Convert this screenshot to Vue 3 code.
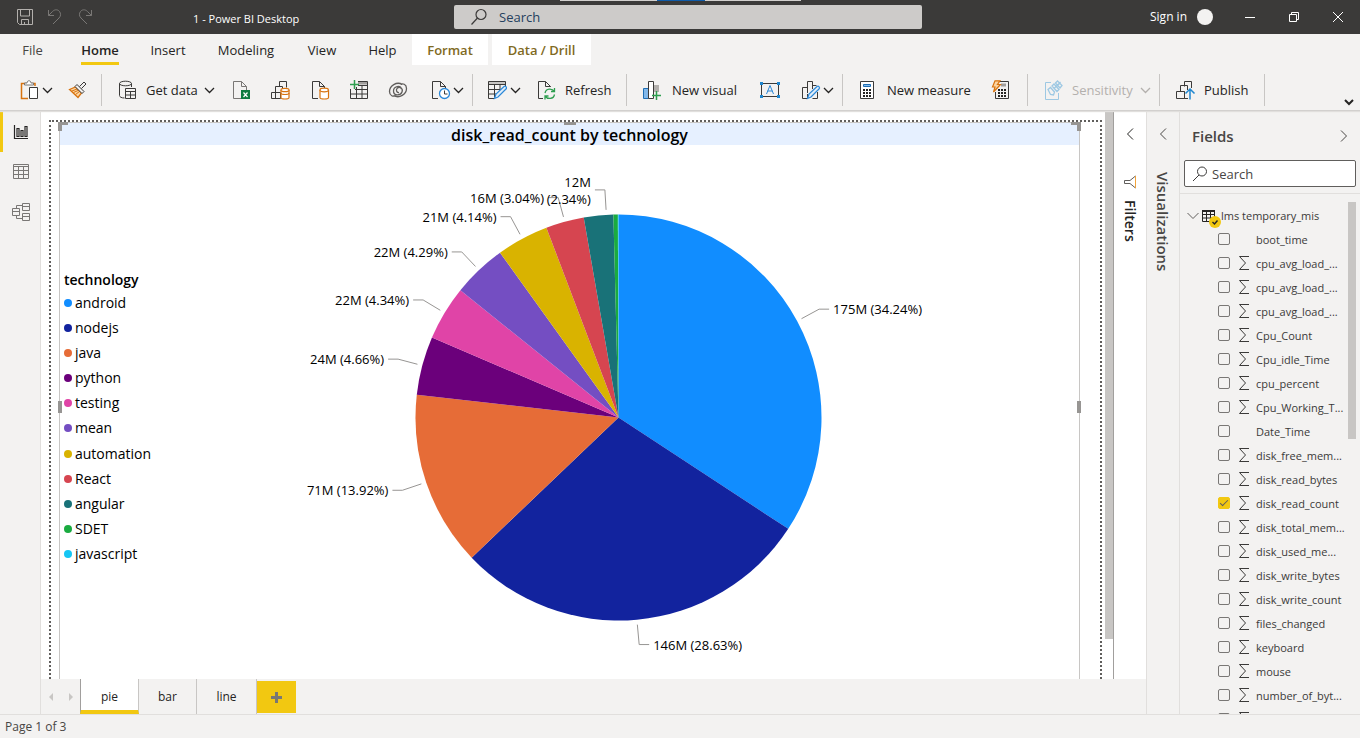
<script setup>
const cx = 409.5
const cy = 272.5
const radius = 203

const slices = [
  { name: 'android', share: 34.24, color: '#118dff', label: ['175M (34.24%)'] },
  { name: 'nodejs', share: 28.63, color: '#12239e', label: ['146M (28.63%)'] },
  { name: 'java', share: 13.92, color: '#e66c37', label: ['71M (13.92%)'] },
  { name: 'python', share: 4.66, color: '#6b007b', label: ['24M (4.66%)'] },
  { name: 'testing', share: 4.34, color: '#e044a7', label: ['22M (4.34%)'] },
  { name: 'mean', share: 4.29, color: '#744ec2', label: ['22M (4.29%)'] },
  { name: 'automation', share: 4.14, color: '#d9b300', label: ['21M (4.14%)'] },
  { name: 'React', share: 3.04, color: '#d64550', label: ['16M (3.04%)'] },
  { name: 'angular', share: 2.34, color: '#197278', label: ['12M', '(2.34%)'], anchor: 0.9905 },
  { name: 'SDET', share: 0.35, color: '#1aab40', label: null },
  { name: 'javascript', share: 0.05, color: '#15c6f4', label: null }
]

const point = (turn, r) => {
  const a = turn * 2 * Math.PI
  return [cx + r * Math.sin(a), cy - r * Math.cos(a)]
}

let total = 0
const wedges = slices.map((s) => {
  const from = total / 100
  total += s.share
  const to = total / 100
  const mid = s.anchor || (from + to) / 2
  const start = point(from, radius)
  const end = point(to, radius)
  const near = point(mid, radius + 5)
  const far = point(mid, radius + 25)
  const side = mid < 0.5 ? 1 : -1
  return {
    ...s,
    side,
    path: `M${cx} ${cy}L${start}A${radius} ${radius} 0 0 1 ${end}Z`,
    leader: `${near} ${far} ${far[0] + side * 10},${far[1]}`,
    x: far[0] + side * 14,
    y: far[1] + (s.label && s.label.length > 1 ? -3 : 5)
  }
})
const labelled = wedges.filter((w) => w.label)

const fields = [
  ['boot_time', false], ['cpu_avg_load_...', true], ['cpu_avg_load_...', true], ['cpu_avg_load_...', true],
  ['Cpu_Count', true], ['Cpu_idle_Time', true], ['cpu_percent', true], ['Cpu_Working_T...', true],
  ['Date_Time', false], ['disk_free_mem...', true], ['disk_read_bytes', true], ['disk_read_count', true],
  ['disk_total_mem...', true], ['disk_used_me...', true], ['disk_write_bytes', true], ['disk_write_count', true],
  ['files_changed', true], ['keyboard', true], ['mouse', true], ['number_of_byt...', true], ['', true]
]
</script>

<template>
  <div class="app">
    <header class="titlebar">
      <div class="progress"><i></i></div>
      <div class="title-left">
        <button class="bare" aria-label="Save">
          <svg width="18" height="18" viewBox="0 0 18 18" fill="none" stroke="#b3b0ad"><path d="M1.500 1.500h15v15h-13l-2-2zM4.500 2v6h9v-6M5.500 16.500v-5h7v5M8.500 14v2"/></svg>
        </button>
        <button class="bare" aria-label="Undo">
          <svg width="18" height="18" viewBox="0 0 18 18" fill="none" stroke="#797775"><path d="M2.500 2v5.500h5.500M2.500 7.500L6.500 3.500C9 1 12 1.500 13.500 3.500C15 5.500 15 8 13 10L7 16"/></svg>
        </button>
        <button class="bare" aria-label="Redo">
          <svg width="18" height="18" viewBox="0 0 18 18" fill="none" stroke="#797775"><path d="M15.500 2v5.500h-5.500M15.500 7.500L11.500 3.500C9 1 6 1.500 4.500 3.500C3 5.500 3 8 5 10L11 16"/></svg>
        </button>
        <span class="doc">1 - Power BI Desktop</span>
      </div>
      <label class="top-search">
        <svg width="18" height="18" viewBox="0 0 18 18" fill="none" stroke="#3b3a39" stroke-width="1.200"><circle cx="11" cy="6.500" r="5"/><path d="M7.500 10L1.500 16.500"/></svg>
        <input type="text" placeholder="Search" aria-label="Search" />
      </label>
      <div class="title-right">
        <button class="bare sign">Sign in<span class="avatar"></span></button>
        <button class="bare win" aria-label="Minimize"><svg width="12" height="12" viewBox="0 0 12 12" stroke="#fff"><path d="M1 6.500h10"/></svg></button>
        <button class="bare win" aria-label="Restore"><svg width="12" height="12" viewBox="0 0 12 12" fill="none" stroke="#fff"><path d="M1.500 3.500h7v7h-7zM3.500 3.500v-2h7v7h-2"/></svg></button>
        <button class="bare win" aria-label="Close"><svg width="12" height="12" viewBox="0 0 12 12" stroke="#fff"><path d="M1 1l10 10M11 1L1 11"/></svg></button>
      </div>
    </header>

    <nav class="tabs">
      <button class="t-file">File</button>
      <button class="t-home"><b>Home</b></button>
      <button class="t-insert">Insert</button>
      <button class="t-model">Modeling</button>
      <button class="t-view">View</button>
      <button class="t-help">Help</button>
      <button class="t-format ctx">Format</button>
      <button class="t-data ctx">Data / Drill</button>
    </nav>

    <div class="toolbar">
      <div class="group g1">
        <button class="tool split" aria-label="Paste">
          <svg class="ic" viewBox="0 0 20 20" fill="none"><path d="M6 3.500H1.500v15H8M12 3.500h3V6" stroke="#d8730f" stroke-width="1.500"/><path d="M4.500 5V3h2.500c0-3 4-3 4 0h2.500v2z" stroke="#797775" fill="#fff"/><path d="M9.500 7.500h8v11h-8z" stroke="#3b3a39" fill="#fff"/></svg>
          <svg class="chev" viewBox="0 0 11 8"><path d="M1 2l4.500 4.500L10 2"/></svg>
        </button>
        <button class="tool brush" aria-label="Format painter">
          <svg class="ic" viewBox="0 0 20 20" fill="none"><path d="M1.500 9.500L7.500 7l6 6-3.500 4.500z" fill="#fcd5a1" stroke="#d8730f" stroke-width="1.300"/><path d="M4 11l5-2M5.500 12.500l4.500-2M7.500 14.500l4-3" stroke="#d8730f"/><path d="M7 6.500l2-2 7 7-2 2zM11.500 6.500L16 2l2 2-4.500 4.500" stroke="#3b3a39" fill="#f3f2f1"/></svg>
        </button>
      </div>
      <div class="group g2">
        <button class="tool get">
          <svg class="ic" viewBox="0 0 20 20" fill="none" stroke="#3b3a39"><ellipse cx="7.500" cy="3.500" rx="6" ry="2.300"/><path d="M1.500 3.500v12c0 1.500 2 2.500 5 2.500M13.500 3.500V7M7.500 8.500h10v10h-10zM7.500 11.500h10M12.500 11.500v7M7.500 15h10"/></svg>
          <span>Get data</span>
          <svg class="chev" viewBox="0 0 11 8"><path d="M1 2l4.500 4.500L10 2"/></svg>
        </button>
        <button class="tool only" aria-label="Excel workbook">
          <svg class="ic" viewBox="0 0 20 20" fill="none"><path d="M9 18.500H1.500v-17h8l5 5V10M9.500 1.500v5h5" stroke="#797775"/><path d="M9 10h9v9H9z" fill="#107c41"/><path d="M11.500 12.500l4 4.500M15.500 12.500l-4 4.500" stroke="#fff" stroke-width="1.200"/></svg>
        </button>
        <button class="tool only" aria-label="Data hub">
          <svg class="ic" viewBox="0 0 20 20" fill="none" stroke="#3b3a39"><path d="M8.500 6.500v-5h7v6M4.500 12V6.500h7V9M.5 12.500h9v6h-9zM4.500 12.500v6"/><g stroke="#d8730f" fill="#fff" stroke-width="1.200"><path d="M10 10v7.500c0 2 8 2 8 0V10"/><ellipse cx="14" cy="10" rx="4" ry="1.700"/><path d="M10 13c0 2 8 2 8 0" fill="none"/></g></svg>
        </button>
        <button class="tool only" aria-label="SQL Server">
          <svg class="ic" viewBox="0 0 20 20" fill="none"><path d="M8 18.500H2.500v-17h7l5 5V8M9.500 1.500v5h5" stroke="#3b3a39"/><g stroke="#d8730f" fill="#fff" stroke-width="1.200"><path d="M10 10v7.500c0 2 8.500 2 8.500 0V10"/><ellipse cx="14.200" cy="10" rx="4.200" ry="1.800"/></g></svg>
        </button>
        <button class="tool only" aria-label="Enter data">
          <svg class="ic" viewBox="0 0 20 20" fill="none"><path d="M9 3h9" stroke="#a19f9d" stroke-width="3"/><path d="M9 1.500h9.500v17h-17V9M9 5.500h9.500M6 9.500h12.500M2 14h16.500M7.500 7v11M13 5v13" stroke="#3b3a39"/><path d="M5.500 0v9M1 4.500h9" stroke="#2e9e4f" stroke-width="1.500"/></svg>
        </button>
        <button class="tool only" aria-label="Dataverse">
          <svg class="ic" viewBox="0 0 20 20" fill="none" stroke="#605e5c" stroke-width="1.300"><path d="M14.500 4.500C8.500 1 1.500 6 1.500 11.500c0 4.500 4 5.500 6 4M5.500 15.500c6 3.500 13-1.500 13-7 0-4.500-4-5.500-6-4M13.500 9c-1-4-8-3-8 2s7 5 8.500 1S11.500 6.500 9.500 8s-1 5 1.500 4.500"/></svg>
        </button>
        <button class="tool recent" aria-label="Recent sources">
          <svg class="ic" viewBox="0 0 20 20" fill="none"><path d="M7 18.500H1.500v-17h8l5 5V8M9.500 1.500v5h5" stroke="#3b3a39"/><circle cx="13.500" cy="13.500" r="5" stroke="#2b88d8" stroke-width="1.300" fill="#fff"/><path d="M13.500 10.500v3.500h3" stroke="#3b3a39"/></svg>
          <svg class="chev" viewBox="0 0 11 8"><path d="M1 2l4.500 4.500L10 2"/></svg>
        </button>
      </div>
      <div class="group g3">
        <button class="tool trans" aria-label="Transform data">
          <svg class="ic" viewBox="0 0 20 20" fill="none"><path d="M1 3h18" stroke="#c8c6c4" stroke-width="3"/><path d="M7 18.500H1.500v-17h17V7M1.500 4.500h17M1.500 9.500H14M1.500 14H9M7.500 4.500v13M13 4.500V9" stroke="#3b3a39"/><path d="M7.500 18.500l1.500-4.500 8-7.500c1.500-1 3.500 1 2 2.500l-8 8z" stroke="#2b88d8" fill="#deecf9" stroke-width="1.200"/></svg>
          <svg class="chev" viewBox="0 0 11 8"><path d="M1 2l4.500 4.500L10 2"/></svg>
        </button>
        <button class="tool refresh">
          <svg class="ic" viewBox="0 0 20 20" fill="none"><path d="M6 18.500H1.500v-17h7l5 5V7M8.500 1.500v5h5" stroke="#3b3a39"/><path d="M8 13c1-5 7-5 9.500-1.500M17.500 8v3.500H14M17.500 14.500c-1 5-7 5-9.500 1.500M8 19.500V16h3.500" stroke="#2e9e4f" stroke-width="1.300"/></svg>
          <span>Refresh</span>
        </button>
      </div>
      <div class="group g4">
        <button class="tool newvisual">
          <svg class="ic" viewBox="0 0 20 20" fill="none"><path d="M1.500 8.500h5v10h-5z" fill="#83b9eb" stroke="#1f6fb5"/><path d="M11 5h6v7h-6z" fill="#b3b0ad"/><path d="M6.500 18.500v-17h5v17z" fill="#fff" stroke="#3b3a39"/><path d="M14.500 11v9M10 15.500h9" stroke="#2e9e4f" stroke-width="1.500"/></svg>
          <span>New visual</span>
        </button>
        <button class="tool textbox" aria-label="Text box">
          <svg class="ic" viewBox="0 0 20 20" fill="none"><path d="M1.500 3.500h17v13h-17z" stroke="#3b3a39"/><g fill="#1f87d0"><path d="M0 2h3v3H0zM17 2h3v3h-3zM0 15h3v3H0zM17 15h3v3h-3z"/></g><path d="M6.500 14L10 5.500l3.500 8.500M7.500 11h5" stroke="#2b88d8"/></svg>
        </button>
        <button class="tool shapes" aria-label="Shapes">
          <svg class="ic" viewBox="0 0 20 20" fill="none"><path d="M6.500 18.500h-5v-11h5M6.500 13V1.500h5V9M11.500 5.500h4M11.500 18.500h5V12M6.500 14v4.500" stroke="#3b3a39"/><path d="M6.500 18.500L8 14l8-7.500c1.500-1 3.500 1 2 2.500l-8 8z" stroke="#2b88d8" fill="#deecf9" stroke-width="1.200"/></svg>
          <svg class="chev" viewBox="0 0 11 8"><path d="M1 2l4.500 4.500L10 2"/></svg>
        </button>
      </div>
      <div class="group g5">
        <button class="tool measure">
          <svg class="ic" viewBox="0 0 20 20" fill="none"><path d="M3.500 1.500h13v17h-13z" fill="#fff" stroke="#3b3a39"/><path d="M6.500 4.500h7v2h-7z" fill="#83b9eb" stroke="#1f6fb5"/><path d="M6 10h8M6 13h8M6 16h8" stroke="#252423" stroke-width="2" stroke-dasharray="2 1"/></svg>
          <span>New measure</span>
        </button>
        <button class="tool quick" aria-label="Quick measure">
          <svg class="ic" viewBox="0 0 20 20" fill="none"><path d="M8 1.500h9.500v17h-13V12" stroke="#3b3a39"/><path d="M10 5h5" stroke="#a19f9d" stroke-width="3"/><path d="M7 10h8M7 13h8M7 16h8" stroke="#252423" stroke-width="2" stroke-dasharray="2 1"/><path d="M4 .8h5L6.500 4.500h3L2.500 12 4 7H1.500z" stroke="#d8730f" fill="#fcd5a1" stroke-width="1.200"/></svg>
        </button>
      </div>
      <div class="group g6">
        <button class="tool sens" disabled>
          <svg class="ic" viewBox="0 0 20 20" fill="none" stroke="#9dc8e3"><path d="M7 2.500H1.500v17h13V13"/><path d="M4 9.500l2.500-2 4 4.500-1 3-3-.5zM8 6l2-2 5 5.500-2 2zM11.500 3l2-2 4.500 4.500-2 2.500zM13 6l3.500-4M10 8.500l5-5" stroke-width="1.300"/></svg>
          <span>Sensitivity</span>
          <svg class="chev" viewBox="0 0 11 8"><path d="M1 2l4.500 4.500L10 2"/></svg>
        </button>
      </div>
      <div class="group g7">
        <button class="tool publish">
          <svg class="ic" viewBox="0 0 20 20" fill="none" stroke="#3b3a39"><path d="M8.500 6.500v-5h7V8M4.500 11.500v-6h7V10M.5 11.500h8v7h-8zM8.500 11.500v7H12"/><path d="M14 19.500V9.500M9.500 13.500L14 9l4.500 4.500" stroke="#1f87d0" stroke-width="1.500"/></svg>
          <span>Publish</span>
        </button>
      </div>
      <button class="bare collapse" aria-label="Collapse ribbon"><svg width="10" height="7" viewBox="0 0 10 7" fill="none" stroke="#252423" stroke-width="2"><path d="M1 1l4 4 4-4"/></svg></button>
    </div>

    <div class="work">
      <aside class="views">
        <button class="on" aria-label="Report view"><svg width="18" height="18" viewBox="0 0 18 18" fill="none" stroke="#252423" stroke-width="1.200"><path d="M2.500 2v13.500H16M5 5.500h2v8H5zM9 7.500h2v6H9zM13 3.500h2v10h-2z"/></svg></button>
        <button aria-label="Data view"><svg width="18" height="18" viewBox="0 0 18 18" fill="none" stroke="#797775"><path d="M1.500 1.500h15v14h-15zM1.500 3.500h15M1.500 7.500h15M1.500 11.500h15M6.500 3.500v12M11.500 3.500v12"/></svg></button>
        <button aria-label="Model view"><svg width="20" height="20" viewBox="0 0 20 20" fill="none" stroke="#797775"><path d="M1.500 6.500h7v7h-7zM1.500 9.500h7M11.500 1.500h7v7h-7zM11.500 4.500h7M11.500 11.500h7v7h-7zM11.500 14.500h7M5.500 6.500v-3h6M5.500 13.500v3h6"/></svg></button>
      </aside>

      <div class="center">
        <div class="stage">
          <main class="canvas">
            <div class="page">
              <section class="visual">
                <i class="h tl"></i><i class="h tc"></i><i class="h tr"></i><i class="h ml"></i><i class="h mr"></i>
                <h1>disk_read_count by technology</h1>
                <div class="chart">
                  <div class="legend">
                    <h2>technology</h2>
                    <ul>
                      <li v-for="s in slices" :key="s.name"><i :style="{ background: s.color }"></i>{{ s.name }}</li>
                    </ul>
                  </div>
                  <svg class="pie" viewBox="0 0 870 534">
                    <path v-for="w in wedges" :key="w.name" :d="w.path" :fill="w.color" />
                    <g v-for="w in labelled" :key="w.name">
                      <polyline :points="w.leader" fill="none" stroke="#979593" />
                      <text v-for="(line, i) in w.label" :key="line" :x="w.x" :y="w.y + i * 17" :text-anchor="w.side > 0 ? 'start' : 'end'">{{ line }}</text>
                    </g>
                  </svg>
                </div>
              </section>
            </div>
            <div class="scroll"><i></i></div>
          </main>
          <aside class="rail filters">
            <button class="bare" aria-label="Expand filters"><svg width="8" height="12" viewBox="0 0 8 12" fill="none" stroke="#252423"><path d="M7 .5L1.500 6 7 11.500"/></svg></button>
            <svg class="funnel" width="14" height="14" viewBox="0 0 14 14" fill="none" stroke="#605e5c"><path d="M12.500 1v12L7 8.500H1.500v-3H7z"/><path d="M12.500 1v12" stroke="#f2a33a"/></svg>
            <span>Filters</span>
          </aside>
        </div>
        <nav class="pages">
          <button class="arrow" aria-label="Previous page"><svg width="6" height="8" viewBox="0 0 6 8"><path d="M5 0v8L1 4z" fill="#c8c6c4"/></svg></button>
          <button class="arrow" aria-label="Next page"><svg width="6" height="8" viewBox="0 0 6 8"><path d="M1 0v8l4-4z" fill="#c8c6c4"/></svg></button>
          <button class="pg on">pie</button>
          <button class="pg">bar</button>
          <button class="pg last">line</button>
          <button class="add" aria-label="New page"><svg width="11" height="11" viewBox="0 0 11 11" stroke="#797775" stroke-width="3"><path d="M5.500 0v11M0 5.500h11"/></svg></button>
        </nav>
      </div>

      <aside class="rail viz">
        <button class="bare" aria-label="Expand visualizations"><svg width="8" height="12" viewBox="0 0 8 12" fill="none" stroke="#484644"><path d="M7 .5L1.500 6 7 11.500"/></svg></button>
        <span>Visualizations</span>
      </aside>

      <aside class="fields">
        <div class="fhead">
          <h2>Fields</h2>
          <button class="bare" aria-label="Collapse fields"><svg width="8" height="12" viewBox="0 0 8 12" fill="none" stroke="#484644"><path d="M1 .5L6.500 6 1 11.500"/></svg></button>
        </div>
        <label class="fsearch">
          <svg width="16" height="16" viewBox="0 0 16 16" fill="none" stroke="#3b3a39"><circle cx="10" cy="5.500" r="4.500"/><path d="M7 9L1 15"/></svg>
          <input type="text" placeholder="Search" aria-label="Search fields" />
        </label>
        <div class="list">
          <div class="table-row">
            <svg class="down" width="12" height="8" viewBox="0 0 12 8" fill="none" stroke="#605e5c"><path d="M.5 1L6 6.500 11.500 1"/></svg>
            <svg class="tbl" width="20" height="20" viewBox="0 0 20 20" fill="none"><path d="M1 2h13" stroke="#252423" stroke-width="2"/><path d="M1.500 2v10.500h12V2M1.500 5.500h12M1.500 9h12M5.500 2v10M9.500 2v10" stroke="#252423"/><circle cx="14" cy="13" r="6" fill="#f2c811"/><path d="M11.500 13l2 2 3-3.500" stroke="#252423" stroke-width="1.400"/></svg>
            <span>lms temporary_mis</span>
          </div>
          <label v-for="(f, i) in fields" :key="i" class="field">
            <input type="checkbox" :checked="f[0] === 'disk_read_count'" />
            <svg width="12" height="14" viewBox="0 0 12 14" fill="none" stroke="#3b3a39"><path v-if="f[1]" d="M11 .5H1.500L7.500 7l-6 6.500H11"/></svg>
            <span>{{ f[0] }}</span>
          </label>
          <i class="thumb"></i>
        </div>
      </aside>
    </div>

    <footer class="status">Page 1 of 3</footer>
  </div>
</template>

<style>
body { margin: 0; }
</style>

<style scoped>
* { box-sizing: border-box; }
.app { display: flex; flex-direction: column; height: 100vh; overflow: hidden; background: #f3f2f1; color: #252423; font: 13px/20px "Open Sans", "Noto Sans", sans-serif; }
button, input { font: inherit; color: inherit; margin: 0; }
button { border: 0; background: none; padding: 0; display: flex; align-items: center; white-space: nowrap; flex: none; }
h1, h2, ul { margin: 0; padding: 0; list-style: none; }
h1, h2 { font-weight: 600; }
svg { display: block; flex: none; }

.titlebar { position: relative; display: grid; grid-template-columns: 454fr 468fr 438fr; align-items: center; height: 34px; flex: none; background: #3b3a39; color: #fff; }
.progress { position: absolute; top: 0; left: 41.200%; width: 17.700%; height: 1px; background: #d2d0ce; }
.progress i { display: block; width: 20%; height: 1px; margin-left: 40%; background: #0f5ba8; }
.title-left { display: flex; align-items: center; padding-left: 16px; gap: 12px; }
.doc { font-size: 11px; margin-left: 87px; padding-top: 3px; }
.top-search { display: flex; align-items: center; gap: 11px; height: 24px; padding-left: 16px; border-radius: 2px; background: #cdcbc9; }
input[type="text"] { border: 0; padding: 0; outline: 0; background: none; flex: 1; min-width: 0; }
.top-search input::placeholder { color: #24405e; opacity: 1; }
.title-right { display: flex; justify-content: flex-end; align-items: center; }
.sign { font-size: 12px; gap: 10px; margin-right: 15px; }
.avatar { width: 16px; height: 16px; border-radius: 50%; background: #f3f2f1; }
.win { width: 44px; justify-content: center; }

.tabs { display: flex; height: 31px; flex: none; }
.tabs button { justify-content: center; height: 31px; }
.t-file { width: 65px; color: #484644; }
.tabs .t-home { width: 70px; position: relative; }
.t-home b { font-weight: 600; }
.t-home::after { content: ""; position: absolute; left: 16px; right: 16px; bottom: 0; height: 3px; background: #f2c811; }
.t-insert { width: 66px; }
.t-model { width: 90px; }
.t-view { width: 62px; }
.t-help { width: 59px; }
.t-format { width: 76px; margin-right: 4px; }
.t-data { width: 99px; }
.ctx { background: #fff; color: #7f6a23; font-weight: 600; }

.toolbar { position: relative; z-index: 1; display: flex; align-items: center; height: 46px; flex: none; padding-top: 4px; border-bottom: 1px solid #d2d0ce; box-shadow: 0 1px 1px #e1dfdd; }
.group { display: flex; align-items: center; height: 32px; flex: none; border-right: 1px solid #c8c6c4; }
.ic { width: 20px; height: 20px; }
.chev { width: 11px; height: 8px; fill: none; stroke: #252423; stroke-width: 1.300; }
.tool { height: 32px; }
.g1 { width: 102px; padding-left: 20px; }
.split { width: 48px; gap: 2px; }
.g2 { width: 371px; padding-left: 16px; }
.get { width: 104px; }
.get span { margin: 0 6px 0 8px; }
.only { width: 39px; justify-content: center; }
.recent { margin-left: 14px; gap: 2px; }
.g3 { width: 154px; padding-left: 14px; }
.trans { width: 50px; gap: 3px; }
.refresh span, .sens span, .publish span { margin-left: 8px; }
.g4 { width: 216px; padding-left: 15px; }
.newvisual { width: 118px; }
.newvisual span, .measure span { margin-left: 10px; }
.textbox { width: 41px; }
.shapes { gap: 2px; }
.g5 { width: 185px; padding-left: 14px; }
.measure { width: 134px; }
.g6 { width: 132px; padding-left: 16px; }
.sens { color: #b3b0ad; }
.sens .chev { stroke: #b3b0ad; margin-left: 7px; }
.g7 { width: 105px; padding-left: 16px; }
.collapse { margin: 26px 6px 0 auto; }

.work { display: flex; flex: 1; min-height: 0; }
.views { width: 41px; flex: none; border-right: 1px solid #e1dfdd; padding-top: 1px; }
.views button { width: 40px; height: 40px; justify-content: center; border-left: 3px solid transparent; padding-right: 2px; }
.views .on { border-color: #f2c811; }
.center { flex: 1; min-width: 0; display: flex; flex-direction: column; }
.stage { flex: 1; min-height: 0; display: flex; background: #fff; }
.canvas { flex: 1; min-width: 0; display: flex; justify-content: space-between; border-right: 1px solid #a19f9d; overflow: hidden; }
.page { flex: 1; min-width: 0; margin: 9px 3px 0 8px; border: 2px dotted #605e5c; border-bottom: 0; padding: 0 20px 0 8px; }
.visual { position: relative; height: 100%; display: flex; flex-direction: column; border: 1px solid #c8c6c4; border-bottom: 0; }
.visual h1 { height: 22px; background: #e6f0ff; color: #000; font-size: 16px; line-height: 24px; text-align: center; }
.h { position: absolute; background: #979593; }
.tl { left: -2px; top: -1px; width: 10px; height: 9px; background: none; border: solid #979593; border-width: 3px 0 0 4px; }
.tr { right: -2px; top: -1px; width: 10px; height: 9px; background: none; border: solid #979593; border-width: 3px 4px 0 0; }
.tc { left: 50%; top: -1px; width: 12px; height: 3px; margin-left: -6px; }
.ml { left: -2px; top: 50%; width: 4px; height: 12px; }
.mr { right: -2px; top: 50%; width: 4px; height: 12px; }
.chart { flex: 1; min-height: 0; display: flex; }
.legend { width: 149px; flex: none; padding: 125px 0 0 4px; color: #000; font-size: 14px; }
.legend h2 { font-size: 14px; line-height: 20px; }
.legend ul { display: flex; flex-direction: column; justify-content: space-between; height: 277px; }
.legend li { display: flex; align-items: center; gap: 3px; height: 25px; }
.legend li i { width: 8px; height: 8px; border-radius: 50%; }
.pie { flex: 1; min-width: 0; width: 100%; height: 100%; font-size: 13px; fill: #000; }
.scroll { width: 8px; flex: none; }
.scroll i { display: block; height: 93%; background: #c8c6c4; }

.rail { width: 33px; flex: none; display: flex; flex-direction: column; align-items: center; padding-top: 17px; border-right: 1px solid #e1dfdd; font-size: 15px; font-weight: 600; }
.rail span { writing-mode: vertical-rl; line-height: 20px; }
.filters { border-right: 0; width: 32px; }
.filters span { font-size: 14px; margin-top: 11px; }
.funnel { margin-top: 35px; }
.viz { width: 34px; border-left: 1px solid #e1dfdd; color: #484644; }
.viz span { margin-top: 32px; }

.pages { height: 35px; flex: none; display: flex; font-size: 12px; }
.arrow { width: 20px; justify-content: center; }
.pg { width: 58px; justify-content: center; border-right: 1px solid #c8c6c4; }
.pg.on { width: 59px; margin-left: -1px; background: #fff; border-left: 1px solid #a19f9d; border-bottom: 4px solid #f2c811; padding-top: 4px; }
.pg.last { width: 60px; }
.add { width: 39px; height: 32px; margin-top: 2px; background: #f2c811; justify-content: center; }

.fields { width: 180px; flex: none; display: flex; flex-direction: column; color: #3b3a39; }
.fhead { display: flex; align-items: center; justify-content: space-between; height: 49px; padding: 0 12px; flex: none; }
.fhead h2 { font-size: 15px; line-height: 20px; padding-top: 1px; color: #484644; }
.fsearch { display: flex; align-items: center; gap: 4px; height: 27px; flex: none; margin: 0 4px 6px; padding-left: 7px; border: 1px solid #605e5c; border-radius: 2px; background: #fff; }
.fsearch input::placeholder { color: #484644; opacity: 1; }
.list { position: relative; flex: 1; min-height: 0; overflow: hidden; border-top: 1px solid #e1dfdd; padding-top: 10px; font-size: 11px; }
.table-row { display: flex; align-items: center; height: 24px; padding-left: 7px; }
.tbl { margin: 6px 0 0 2px; }
.field { display: flex; align-items: center; height: 24px; padding-left: 38px; white-space: nowrap; }
.field svg { margin: 0 6px 2px 8px; }
.field input { appearance: none; width: 12px; height: 12px; flex: none; margin: 0 0 2px; border: 1px solid #797775; border-radius: 2px; display: grid; place-items: center; }
.field input:checked { background: #f2c811; border-color: #f2c811; }
.field input:checked::after { content: ""; width: 7px; height: 3px; margin-top: -2px; border: solid #605e5c; border-width: 0 0 1px 1px; transform: rotate(-45deg); }
.thumb { position: absolute; top: 8px; right: 4px; width: 8px; height: 237px; background: #c8c6c4; }

.status { height: 24px; flex: none; border-top: 1px solid #e1dfdd; padding: 2px 5px; font-size: 12px; color: #484644; }
</style>
